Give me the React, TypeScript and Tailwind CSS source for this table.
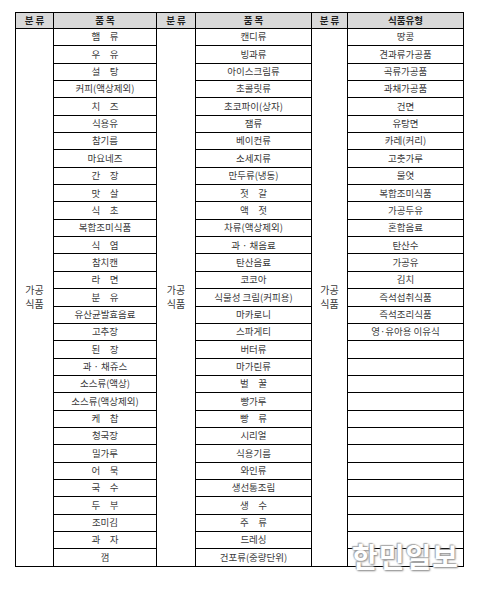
import React from "react";

const col1 = ["햄　류","우　유","설　탕","커피(액상제외)","치　즈","식용유","참기름","마요네즈","간　장","맛　살","식　초","복합조미식품","식　염","참치캔","라　면","분　유","유산균발효음료","고추장","된　장","과 · 채쥬스","소스류(액상)","소스류(액상제외)","케　찹","청국장","밀가루","어　묵","국　수","두　부","조미김","과　자","껌"];
const col2 = ["캔디류","빙과류","아이스크림류","초콜릿류","초코파이(상자)","잼류","베이컨류","소세지류","만두류(냉동)","젓　갈","액　젓","차류(액상제외)","과 · 채음료","탄산음료","코코아","식물성 크림(커피용)","마카로니","스파게티","버터류","마가린류","벌　꿀","빵가루","빵　류","시리얼","식용기름","와인류","생선통조림","생　수","주　류","드레싱","건포류(중량단위)"];
const col3 = ["땅콩","견과류가공품","곡류가공품","과채가공품","건면","유탕면","카레(커리)","고춧가루","물엿","복합조미식품","가공두유","혼합음료","탄산수","가공유","김치","즉석섭취식품","즉석조리식품","영·유아용 이유식"];

const base = "border border-black text-center align-middle p-0 whitespace-pre";
const cell = base + " leading-none";
const merged = base + " text-[10px]";

function Merged() {
  return (
    <td rowSpan={31} className={merged}>
      <div className="leading-[14.5px]">가공</div>
      <div className="leading-[14.5px]">식품</div>
    </td>
  );
}

export default function App() {
  return (
    <div className="relative w-[480px] h-[589px] bg-white overflow-hidden" style={{ fontFamily: '"Noto Sans CJK KR", "Noto Sans", sans-serif' }}>
      <div className="pt-[12px] pl-[15px]">
        <table className="border-collapse table-fixed w-[448px] text-[9.5px] text-[#3a3a3a]">
          <colgroup>
            <col className="w-[38px]" />
            <col className="w-[103px]" />
            <col className="w-[39px]" />
            <col className="w-[116px]" />
            <col className="w-[36px]" />
            <col className="w-[116px]" />
          </colgroup>
          <thead>
            <tr className="h-[16px] bg-[#d9d9d9] text-[#222]">
              <th className={cell + " font-semibold"}>분 류</th>
              <th className={cell + " font-semibold"}>품 목</th>
              <th className={cell + " font-semibold"}>분 류</th>
              <th className={cell + " font-semibold"}>품 목</th>
              <th className={cell + " font-semibold"}>분 류</th>
              <th className={cell + " font-semibold"}>식품유형</th>
            </tr>
          </thead>
          <tbody>
            {col1.map((a, i) => (
              <tr key={i} className="h-[17.35px]">
                {i === 0 && <Merged />}
                <td className={cell}>{a}</td>
                {i === 0 && <Merged />}
                <td className={cell}>{col2[i]}</td>
                {i === 0 && <Merged />}
                <td className={cell}>{col3[i] ?? ""}</td>
              </tr>
            ))}
          </tbody>
        </table>
      </div>
      <div
        className="absolute left-[352px] top-[542px] text-[28px] font-bold leading-none text-white tracking-[1px]"
        style={{ textShadow: "0 0 2px #9a9a9a, 1px 1px 2px #8a8a8a, -1px -1px 1px #b0b0b0" }}
      >
        한민일보
      </div>
    </div>
  );
}
